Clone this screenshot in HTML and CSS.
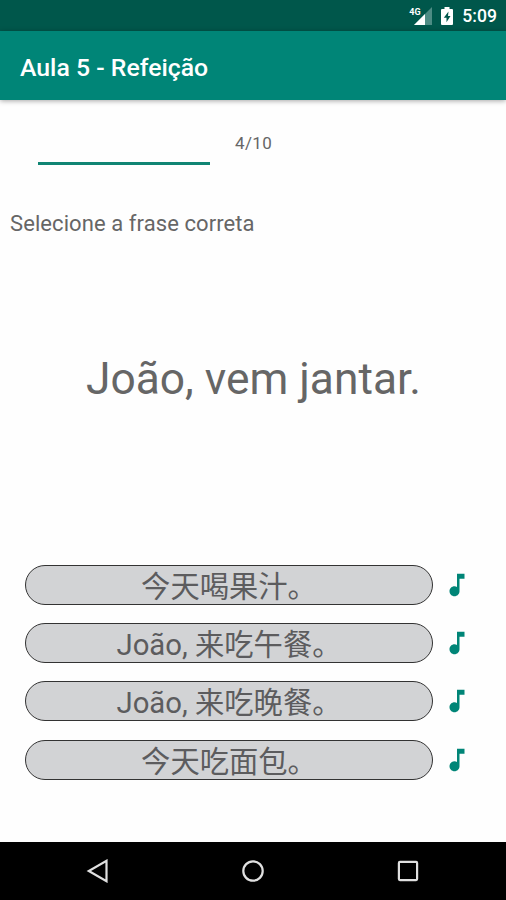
FILE: index.html
```html
<!DOCTYPE html>
<html lang="pt-BR">
<head>
  <meta charset="UTF-8" />
  <meta name="viewport" content="width=device-width, initial-scale=1.0"/>
  <title>Aula 5 - Refeição</title>
  <link rel="stylesheet" href="styles.css">
</head>
<body>
  <svg width="0" height="0" class="defs">
    <symbol id="nota" viewBox="0 0 24 24">
      <path d="M12 3v10.55c-.59-.34-1.27-.55-2-.55-2.21 0-4 1.79-4 4s1.79 4 4 4 4-1.79 4-4V7h4V3h-6z"/>
    </symbol>
  </svg>

  <div class="status">
    <div class="sinal">
      <span>4G</span>
      <svg width="18" height="18" viewBox="0 0 18 18">
        <path d="M18 0v18H0z" fill="#4d8c84"/>
        <path d="M11 7v11H0z" fill="#fff"/>
      </svg>
    </div>
    <svg class="bateria" width="12" height="18" viewBox="0 0 12 18">
      <path d="M3.5 0h5v2H11q1 0 1 1v14q0 1-1 1H1q-1 0-1-1V3q0-1 1-1h2.500z" fill="#fff"/>
      <path d="M7.500 4.500L2.800 10.800h2.700v4.500l4-6.300H7z" fill="#00574b"/>
    </svg>
    <span class="hora">5:09</span>
  </div>

  <header class="barra">
    <h1>Aula 5 - Refeição</h1>
  </header>

  <main class="main">
    <div class="progresso">
      <div class="linha"></div>
      <span>4/10</span>
    </div>
    <p class="instrucao">Selecione a frase correta</p>
    <div class="frase">João, vem jantar.</div>

    <div class="opcoes">
      <div class="opcao">
        <button class="resposta">今天喝果汁。</button>
        <svg class="som"><use href="#nota"/></svg>
      </div>
      <div class="opcao">
        <button class="resposta">João, 来吃午餐。</button>
        <svg class="som"><use href="#nota"/></svg>
      </div>
      <div class="opcao">
        <button class="resposta">João, 来吃晚餐。</button>
        <svg class="som"><use href="#nota"/></svg>
      </div>
      <div class="opcao">
        <button class="resposta">今天吃面包。</button>
        <svg class="som"><use href="#nota"/></svg>
      </div>
    </div>
  </main>

  <nav class="navegacao">
    <svg width="24" height="24" viewBox="0 0 24 24"><path d="M20.500 1.800v20.400L2.800 12z"/></svg>
    <svg width="24" height="24" viewBox="0 0 24 24"><circle cx="12" cy="12" r="9.700"/></svg>
    <svg width="24" height="24" viewBox="0 0 24 24"><rect x="2.900" y="2.900" width="18.200" height="18.200" rx="1"/></svg>
  </nav>
</body>
</html>
```

FILE: styles.css
```css
* {
  box-sizing: border-box;
}

body {
  margin: 0;
  height: 900px;
  display: flex;
  flex-direction: column;
  background: #fefefe;
  color: #666;
  font-family: Roboto, "Noto Sans CJK SC", sans-serif;
  overflow: hidden;
}

.defs {
  position: absolute;
}

.status {
  height: 31px;
  flex: none;
  display: flex;
  justify-content: flex-end;
  align-items: flex-start;
  padding: 7px 9px 0 0;
  background: #00574b;
  color: white;
}

.sinal {
  position: relative;
  height: 18px;
  margin-right: 9px;
}

.sinal span {
  position: absolute;
  left: -5px;
  top: 0;
  font-size: 9px;
  line-height: 10px;
  font-weight: 700;
}

.sinal svg {
  display: block;
}

.bateria {
  margin-right: 9px;
}

.hora {
  font-size: 17.600px;
  line-height: 19px;
  font-weight: 500;
}

.barra {
  height: 69px;
  flex: none;
  display: flex;
  align-items: center;
  padding: 4px 20px 0;
  background: #008577;
  color: white;
  box-shadow: 0 1px 5px rgba(0, 0, 0, 0.35);
}

h1 {
  margin: 0;
  font-size: 24.800px;
  font-weight: 500;
}

.main {
  flex-grow: 1;
}

.progresso {
  display: flex;
  padding: 33px 0 0 38px;
  height: 110px;
}

.linha {
  width: 172px;
  height: 3px;
  margin: 29px 25px 0 0;
  background: #108574;
}

.progresso span {
  font-size: 17px;
  line-height: 20px;
  letter-spacing: 0.4px;
}

.instrucao {
  margin: 0 0 0 10px;
  font-size: 22px;
  line-height: 28px;
  letter-spacing: 0.08px;
}

.frase {
  height: 280px;
  display: flex;
  align-items: center;
  justify-content: center;
  padding: 2px 0 0 1px;
  font-size: 44.300px;
}

.opcoes {
  display: flex;
  flex-direction: column;
  gap: 18.200px;
  padding: 47px 0 0 25px;
}

.opcao {
  display: flex;
  align-items: center;
  height: 40px;
}

.resposta {
  width: 408px;
  height: 40px;
  padding: 0;
  border: 1px solid #333;
  border-radius: 20px;
  background: #d2d3d5;
  color: #5c5c5e;
  font-family: inherit;
  font-size: 29.300px;
  line-height: 42px;
}

.som {
  width: 30px;
  height: 30px;
  margin-left: 9px;
  fill: #008577;
}

.navegacao {
  height: 58px;
  flex: none;
  display: flex;
  justify-content: center;
  align-items: center;
  gap: 131px;
  background: black;
}

.navegacao svg {
  fill: none;
  stroke: #e0e0e0;
  stroke-width: 2.200;
}
```
